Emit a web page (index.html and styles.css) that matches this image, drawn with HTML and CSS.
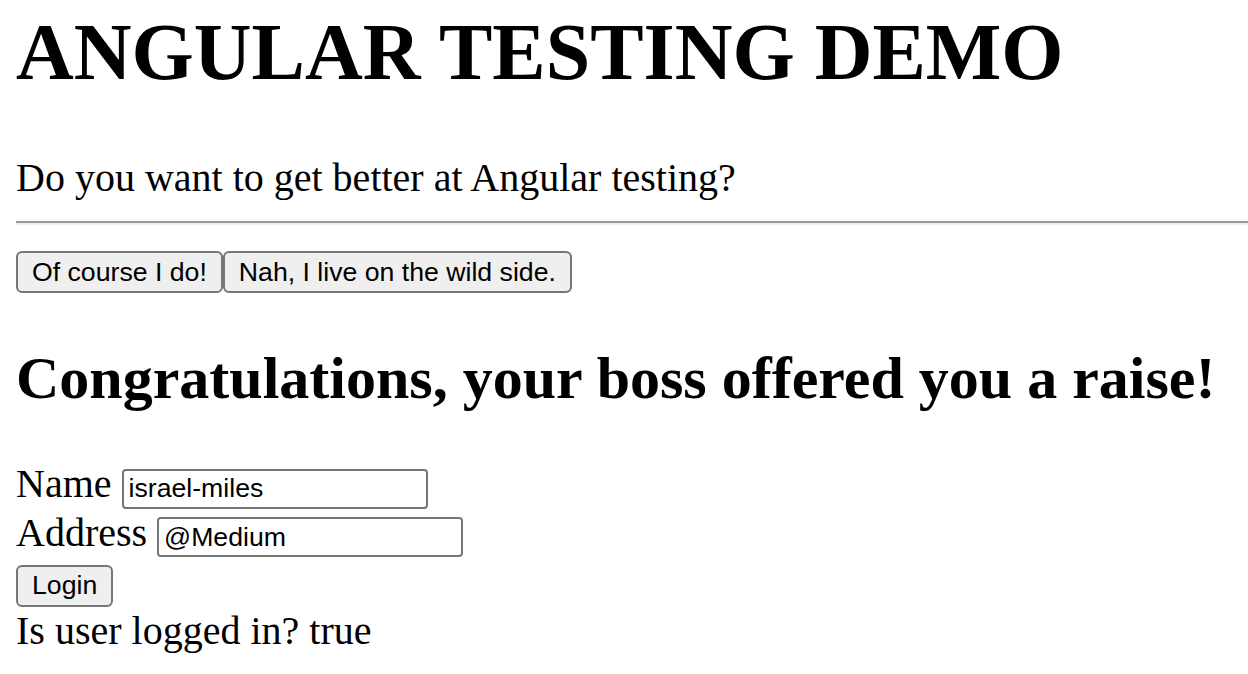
FILE: index.html
```html
<!DOCTYPE html>
<html lang="en">
<head>
<meta charset="utf-8">
<title>Angular Testing Demo</title>
<link rel="stylesheet" href="styles.css">
</head>
<body class="page">
  <h1 class="title">ANGULAR TESTING DEMO</h1>
  <p class="question">Do you want to get better at Angular testing?</p>
  <hr class="divider">
  <div class="choices"><button class="btn">Of course I do!</button><button class="btn">Nah, I live on the wild side.</button></div>
  <h2 class="subtitle">Congratulations, your boss offered you a raise!</h2>
  <form class="login">
    <div class="row">Name <input class="field" type="text" value="israel-miles"></div>
    <div class="row">Address <input class="field" type="text" value="@Medium"></div>
    <div class="row"><button class="btn" type="button">Login</button></div>
    <div class="row">Is user logged in? true</div>
  </form>
</body>
</html>
```

FILE: styles.css
```css
html, body {
  background: #ffffff;
}

.page {
  margin: 0 0 0 16px;
  font-family: "Liberation Serif", "Times New Roman", serif;
  font-size: 40px;
  color: #000000;
  overflow: hidden;
}

.title {
  font-size: 80px;
  font-weight: bold;
  margin: 7px 0 0;
}

.question {
  margin: 56px 0 0;
}

.divider {
  margin: 20px 0 0;
  height: 0;
  border: 0;
  border-top: 2px solid #9a9a9a;
  border-bottom: 2px solid #eeeeee;
}

.choices {
  display: flex;
  gap: 0;
  margin-top: 26px;
}

.btn {
  font-family: "Liberation Sans", Arial, sans-serif;
  font-size: 26.67px;
  color: #000000;
  height: 42px;
  padding: 0 14px;
  background: #efefef;
  border: 2px solid #767676;
  border-radius: 6px;
  box-sizing: border-box;
}

.subtitle {
  font-size: 60px;
  font-weight: bold;
  margin: 51px 0 0;
}

.login {
  margin: 47px 0 0;
}

.row {
  line-height: normal;
}

.field {
  font-family: "Liberation Sans", Arial, sans-serif;
  font-size: 26.67px;
  color: #000000;
  width: 306px;
  height: 40px;
  box-sizing: border-box;
  padding: 0 5px;
  border: 2px solid #767676;
  border-radius: 4px;
  background: #ffffff;
  vertical-align: baseline;
}
```
